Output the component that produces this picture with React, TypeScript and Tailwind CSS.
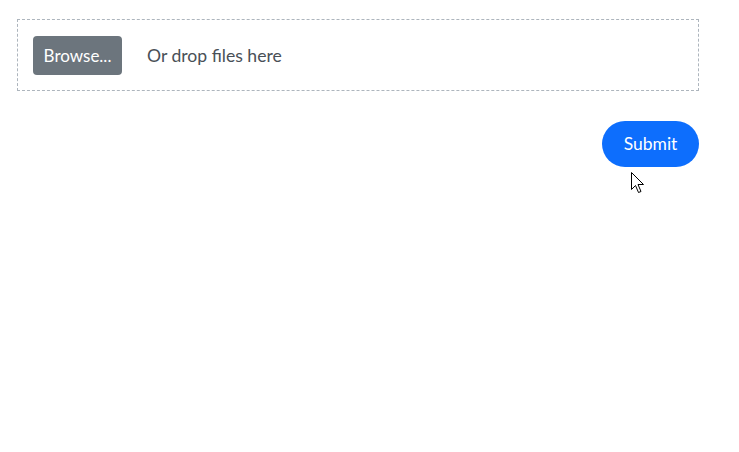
export default function App() {
  return (
    <div className="relative w-[739px] h-[452px] bg-white" style={{ fontFamily: '"Segoe UI", Lato, "Noto Sans", sans-serif' }}>
      <div className="pt-[19px] pl-[17px] w-[699px]">
        {/* Drop zone */}
        <div className="h-[72px] border border-dashed border-[#adb5bd] flex items-center px-[15px] gap-[25px]">
          <button className="h-[39px] w-[89px] rounded-[4px] bg-[#6c757d] text-white text-[17px] pt-[2px]">
            Browse...
          </button>
          <span className="text-[17.6px] text-[#495057] pt-[2px]">Or drop files here</span>
        </div>

        <div className="flex justify-end mt-[30px]">
          <button className="h-[46px] w-[97px] rounded-full bg-[#0d6efd] text-white text-[17.5px] pt-[1px]">
            Submit
          </button>
        </div>
      </div>

      {/* mouse cursor */}
      <svg className="absolute left-[631px] top-[172px]" width="13" height="24" viewBox="0 0 13 24">
        <path
          d="M0.5 0.5 L0.5 17.5 L4.5 13.5 L7.5 20.5 L10 19.5 L7 12.5 L12.5 12.5 Z"
          fill="white"
          stroke="black"
          strokeWidth="1"
          strokeLinejoin="miter"
        />
      </svg>
    </div>
  );
}
